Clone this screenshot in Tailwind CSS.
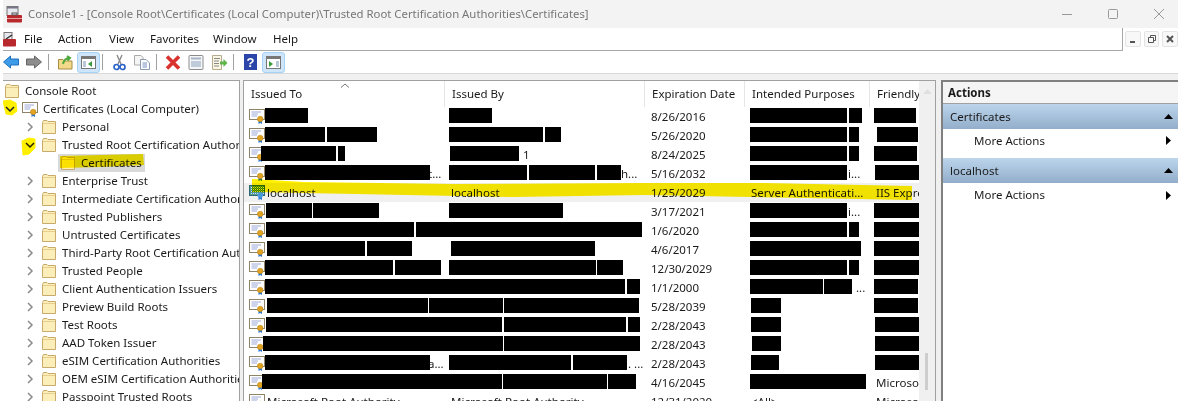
<!DOCTYPE html>
<html><head><meta charset="utf-8">
<title>Console1</title>
<script src="https://cdn.jsdelivr.net/npm/@tailwindcss/browser@4"></script>
</head>
<body class="w-[1178px] h-[401px] overflow-hidden bg-white font-['Noto_Sans',sans-serif] text-[11.5px] text-[#1a1a1a]">
<div class="pl-[3px] relative h-[401px] overflow-hidden">

  <!-- title bar -->
  <div class="flex items-center h-[28px] bg-[#f3f3f3] pl-[3px]">
    <svg width="17" height="17" viewBox="0 0 17 17" class="shrink-0"><rect x="1" y="0.5" width="11" height="9" fill="#e8e8f0" stroke="#777"/><rect x="1" y="0.5" width="11" height="2" fill="#778"/><rect x="1" y="9" width="15" height="7.5" rx="1" fill="#b8282c"/><rect x="6" y="7" width="5" height="2" fill="none" stroke="#555"/><rect x="1" y="12" width="15" height="1" fill="#e9a0a0"/></svg>
    <span class="ml-[5px] text-[11.35px] text-[#777] whitespace-nowrap">Console1 - [Console Root\Certificates (Local Computer)\Trusted Root Certification Authorities\Certificates]</span>
    <div class="ml-auto flex items-center h-full">
      <svg width="12" height="12" viewBox="0 0 12 12" class="mr-[34px]"><path d="M1 6.5H11" stroke="#999"/></svg>
      <svg width="12" height="12" viewBox="0 0 12 12" class="mr-[34px]"><rect x="1.5" y="1.5" width="9" height="9" rx="1" fill="none" stroke="#999"/></svg>
      <svg width="12" height="12" viewBox="0 0 12 12" class="mr-[13px]"><path d="M1 1L11 11M11 1L1 11" stroke="#999"/></svg>
    </div>
  </div>

  <!-- menu bar -->
  <div class="flex h-[23px]">
    <div class="flex-1 flex items-center border-b border-r border-[#a8a8a8] h-[23px]">
      <svg width="13" height="15" viewBox="0 0 13 15" class="shrink-0"><rect x="1" y="0.5" width="8" height="7" fill="#e8e8f0" stroke="#777"/><rect x="0" y="7" width="13" height="7.5" rx="1" fill="#b8282c"/><path d="M3 7L9 3" stroke="#333" stroke-width="1.5"/></svg>
      <span class="ml-[8px] w-[34px]">File</span>
      <span class="w-[51px]">Action</span>
      <span class="w-[41px]">View</span>
      <span class="w-[63px]">Favorites</span>
      <span class="w-[60px]">Window</span>
      <span>Help</span>
    </div>
    <div class="w-[55px] flex items-start gap-[3px] pt-[3px] pl-[2px]">
      <div class="w-[16px] h-[16px] bg-[#f8f8f8] border border-[#e4e4e4] rounded-[2px] flex items-center justify-center"><svg width="10" height="10" viewBox="0 0 10 10"><path d="M2 8H7" stroke="#555" stroke-width="2"/></svg></div>
      <div class="w-[16px] h-[16px] bg-[#f8f8f8] border border-[#e4e4e4] rounded-[2px] flex items-center justify-center"><svg width="10" height="10" viewBox="0 0 10 10"><path d="M1.5 3.5H6.5V8.5H1.5ZM3.5 3.5V1.5H8.5V6.5H6.5" fill="none" stroke="#555"/></svg></div>
      <div class="w-[16px] h-[16px] bg-[#f8f8f8] border border-[#e4e4e4] rounded-[2px] flex items-center justify-center"><svg width="10" height="10" viewBox="0 0 10 10"><path d="M2 2L8 8M8 2L2 8" stroke="#555" stroke-width="2"/></svg></div>
    </div>
  </div>

  <!-- toolbar -->
  <div class="flex items-center h-[23px] border-b border-[#d9d9d9]">
    <svg width="16" height="14" viewBox="0 0 16 14"><path d="M0.5 7L7.5 1V4H15.5V10H7.5V13Z" fill="#3d9be8" stroke="#1f6fc0"/></svg>
    <svg width="16" height="14" viewBox="0 0 16 14" class="ml-[7px]"><path d="M15.5 7L8.5 1V4H0.5V10H8.5V13Z" fill="#8c8c8c" stroke="#666"/></svg>
    <div class="w-px h-[16px] bg-[#a0a0a0] ml-[6px]"></div>
    <svg width="15" height="15" viewBox="0 0 15 15" class="ml-[9px]"><path d="M0.5 4.5H5L6.5 6H14V14H0.5Z" fill="#f3d98a" stroke="#a98b45"/><path d="M5 9C6 5 8 3 11 3M9 1L12 3L9.5 5.5" fill="none" stroke="#4ea83c" stroke-width="2"/></svg>
    <div class="ml-[4px] w-[23px] h-[21px] bg-[#cfe6fa] border border-[#a6d2f5] rounded-[3px] flex items-center justify-center">
      <svg width="15" height="13" viewBox="0 0 15 13"><rect x="0.5" y="0.5" width="14" height="12" fill="#fff" stroke="#777"/><rect x="1" y="1" width="13" height="2" fill="#777"/><rect x="2" y="5" width="3" height="6" fill="#b9c7d6"/><path d="M11 5V11L7 8Z" fill="#3a9a3a"/></svg>
    </div>
    <div class="w-px h-[16px] bg-[#a0a0a0] ml-[2px]"></div>
    <svg width="13" height="17" viewBox="0 0 13 17" class="ml-[10px]"><path d="M9 1L5 10M4 1L8 10" stroke="#8a8a8a" stroke-width="1.4"/><circle cx="3.5" cy="13" r="2.5" fill="none" stroke="#2a62c8" stroke-width="1.7"/><circle cx="9.5" cy="13" r="2.5" fill="none" stroke="#2a62c8" stroke-width="1.7"/></svg>
    <svg width="16" height="15" viewBox="0 0 16 15" class="ml-[8px]"><path d="M0.5 0.5H7L9 2.5V10H0.5Z" fill="#f5f5f5" stroke="#aaa"/><path d="M6.5 4.5H12L15.5 8V14.5H6.5Z" fill="#fff" stroke="#8a9bb5"/><path d="M8.5 8H13M8.5 10H13M8.5 12H13" stroke="#7090c8"/></svg>
    <div class="w-px h-[16px] bg-[#a0a0a0] ml-[6px]"></div>
    <svg width="16" height="15" viewBox="0 0 16 15" class="ml-[8px]"><path d="M2 1.5L14 13.5M14 1.5L2 13.5" stroke="#d8332f" stroke-width="3.6"/></svg>
    <svg width="16" height="15" viewBox="0 0 16 15" class="ml-[7px]"><rect x="1" y="0.5" width="14" height="14" rx="1" fill="#f4f6f8" stroke="#8c8c8c"/><rect x="3" y="2.5" width="10" height="2" fill="#a8b4c4"/><path d="M3 7H13M3 9H13M3 11H13" stroke="#8ba0bc"/></svg>
    <svg width="17" height="15" viewBox="0 0 17 15" class="ml-[7px]"><path d="M1.5 0.5H10.5V14.5H1.5Z" fill="#fbf6e4" stroke="#b5ab8f"/><path d="M3 3.5H9M3 6H8M3 8.5H8M3 11H8" stroke="#888"/><path d="M9 6.5H12.5V4L16.5 8L12.5 12V9.5H9Z" fill="#5fb548"/></svg>
    <div class="w-px h-[16px] bg-[#a0a0a0] ml-[5px]"></div>
    <svg width="13" height="16" viewBox="0 0 13 16" class="ml-[10px]"><rect width="13" height="16" fill="#2b46a8"/><text x="6.5" y="13" text-anchor="middle" font-size="13" font-weight="700" fill="#fff" font-family="Liberation Sans">?</text></svg>
    <div class="ml-[5px] w-[23px] h-[21px] bg-[#cfe6fa] border border-[#a6d2f5] rounded-[3px] flex items-center justify-center">
      <svg width="15" height="13" viewBox="0 0 15 13"><rect x="0.5" y="0.5" width="14" height="12" fill="#fff" stroke="#777"/><rect x="1" y="1" width="13" height="2" fill="#777"/><rect x="10" y="5" width="3" height="6" fill="#b9c7d6"/><path d="M3 5V11L7 8Z" fill="#3a9a3a"/></svg>
    </div>
  </div>

  <!-- panes -->
  <div class="flex gap-[3px] h-[327px] pt-[6px] bg-[#f0f0f0]">
    <div id="tree" class="relative w-[237px] bg-white border-t border-r border-[#a0a0a0] pt-px overflow-hidden"></div>

    <div class="relative w-[693px] flex bg-white border-t border-r border-l border-[#a0a0a0] overflow-hidden">
      <div class="relative w-[675px]">
        <svg width="10" height="5" viewBox="0 0 10 5" class="absolute left-[96px] top-[2px]"><path d="M1 4.5L5 1L9 4.5" fill="none" stroke="#777"/></svg>
        <div class="grid grid-cols-[200px_200px_100px_125px_50px] h-[26px] items-center whitespace-nowrap">
          <div class="pl-[7px] h-full flex items-center">Issued To</div>
          <div class="pl-[7px] border-l border-[#e5e5e5] h-full flex items-center">Issued By</div>
          <div class="pl-[7px] border-l border-[#e5e5e5] h-full flex items-center">Expiration Date</div>
          <div class="pl-[7px] border-l border-[#e5e5e5] h-full flex items-center">Intended Purposes</div>
          <div class="pl-[7px] border-l border-[#e5e5e5] h-full flex items-center">Friendly</div>
        </div>
        <div id="rows"></div>
      </div>
      <div class="relative w-[17px] bg-[#f0f0f0]">
        <svg width="9" height="5" viewBox="0 0 9 5" class="absolute left-[4px] top-[8px]"><path d="M0 5L4.5 0L9 5Z" fill="#e0e0e0"/></svg>
        <div class="absolute left-[6px] top-[272px] w-[3px] h-[37px] bg-[#cdcdcd]"></div>
      </div>
    </div>

    <div class="flex-1 ml-[2px] bg-white border-t-2 border-l-2 border-[#808080]">
      <div class="h-[22px] bg-[#f5f5f5] border-b border-[#a0a0a0] flex items-center pl-[5px] font-bold">Actions</div>
      <div class="h-[25px] bg-gradient-to-b from-[#bcd5ec] to-[#93aecb] flex items-center justify-between pl-[7px] pr-[5px]">Certificates<svg width="9" height="5" viewBox="0 0 9 5"><path d="M0 5L4.5 0L9 5Z" fill="#000"/></svg></div>
      <div class="h-[29px] pl-[31px] pr-[7px] pb-[6px] flex items-center justify-between">More Actions<svg width="5" height="9" viewBox="0 0 5 9"><path d="M0 0L5 4.5L0 9Z" fill="#000"/></svg></div>
      <div class="h-[25px] bg-gradient-to-b from-[#bcd5ec] to-[#93aecb] flex items-center justify-between pl-[7px] pr-[5px]">localhost<svg width="9" height="5" viewBox="0 0 9 5"><path d="M0 5L4.5 0L9 5Z" fill="#000"/></svg></div>
      <div class="h-[24px] pl-[31px] pr-[7px] flex items-center justify-between">More Actions<svg width="5" height="9" viewBox="0 0 5 9"><path d="M0 0L5 4.5L0 9Z" fill="#000"/></svg></div>
    </div>
  </div>
</div>

<script>
  const folder = `<svg width="14" height="14" viewBox="0 0 14 14" class="shrink-0"><path d="M0.5 2.5V13.5H13.5V1.5H6L5 0.5H1.5Z" fill="#fbeeb8" stroke="#c8ab6a"/><path d="M1 3.5H13" stroke="#e6cf8c"/></svg>`;
  const cert = `<svg width="16" height="15" viewBox="0 0 16 15" class="shrink-0"><rect x="0.5" y="0.5" width="15" height="10" fill="#fff" stroke="#8f8468"/><path d="M2.5 3H12M2.5 5H9M2.5 7H8" stroke="#9aa8d8"/><path d="M9.5 11H13V15L11.2 14L9.5 15Z" fill="#2a78d8"/><circle cx="11.2" cy="10" r="2.8" fill="#e0a422" stroke="#b77f10" stroke-width="0.5"/></svg>`;
  const certSel = `<svg width="16" height="15" viewBox="0 0 16 15" class="shrink-0"><defs><pattern id="dith" width="2" height="2" patternUnits="userSpaceOnUse"><rect width="2" height="2" fill="#2f7fd8"/><rect width="1" height="1" fill="#eef2d0"/><rect x="1" y="1" width="1" height="1" fill="#7cb84a"/></pattern></defs><rect x="0.5" y="0.5" width="15" height="10" fill="url(#dith)" stroke="#2a6a70"/><path d="M9.5 11H13V15L11.2 14L9.5 15Z" fill="#2a78d8"/><circle cx="11.2" cy="10" r="2.8" fill="#4a9ad8"/></svg>`;
  const chevR = `<svg width="8" height="10" viewBox="0 0 8 10" class="shrink-0"><path d="M2 1L6 5L2 9" fill="none" stroke="#8a8a8a" stroke-width="1.5"/></svg>`;
  const chevD = `<svg width="10" height="8" viewBox="0 0 10 8" class="shrink-0"><path d="M1 2L5 6L9 2" fill="none" stroke="#222" stroke-width="1.5"/></svg>`;

  const stores = ['Enterprise Trust', 'Intermediate Certification Author', 'Trusted Publishers', 'Untrusted Certificates', 'Third-Party Root Certification Aut', 'Trusted People', 'Client Authentication Issuers', 'Preview Build Roots', 'Test Roots', 'AAD Token Issuer', 'eSIM Certification Authorities', 'OEM eSIM Certification Authoritie', 'Passpoint Trusted Roots'];
  const line = (inner) => `<div class="flex items-center h-[18px] whitespace-nowrap">${inner}</div>`;
  const gap = (w) => `<span class="shrink-0" style="width:${w}px"></span>`;
  let treeHtml = line(gap(2) + folder + gap(6) + '<span>Console Root</span>');
  treeHtml += line(gap(2) + `<span class="relative z-10 flex">${chevD}</span>` + gap(7) + cert + gap(5) + '<span>Certificates (Local Computer)</span>');
  treeHtml += line(gap(23) + chevR + gap(8) + folder + gap(6) + '<span>Personal</span>');
  treeHtml += line(gap(22) + chevD + gap(7) + folder + gap(6) + '<span>Trusted Root Certification Authori</span>');
  treeHtml += line(gap(55) + `<div class="flex items-center h-[18px] bg-[#d9d9d9] pl-[3px] pr-[3px]">${folder}${gap(6)}<span>Certificates</span></div>`);
  stores.forEach((s) => { treeHtml += line(gap(23) + chevR + gap(8) + folder + gap(6) + `<span>${s}</span>`); });
  treeHtml += `<svg class="absolute left-0 top-0 mix-blend-multiply" width="236" height="100"><path d="M0 20L7 19L13 22L14 30L9 34L3 33Z" fill="#fff000" stroke="#fff000" stroke-linejoin="round"/><path d="M19 60L26 57L32 58L32 67L26 73L20 74Z" fill="#fff000" stroke="#fff000" stroke-linejoin="round"/><path d="M57 75L140 73L141 84L98 86L57 87Z" fill="#fff000"/></svg>`;
  document.getElementById('tree').innerHTML = treeHtml;

  // redaction boxes: [left, width] in screenshot x, per row; tail text shows after them
  const rows = [
    { bars: [[265,43],[449,43],[750,97],[849,13],[874,42]], date: '8/26/2016' },
    { bars: [[265,60],[327,50],[449,94],[545,16],[750,97],[849,10],[877,41]], date: '5/26/2020' },
    { bars: [[261,75],[338,7],[450,69],[750,97],[849,10],[874,43]], date: '8/24/2025', by: '1', byPad: 'pl-[79px]' },
    { bars: [[265,165],[449,78],[529,66],[597,24],[750,97],[875,45]], date: '5/16/2032', to: 't...', toPad: 'pl-[163px]', by: 'h...', byPad: 'pl-[177px]', use: 'i...', usePad: 'pl-[104px]' },
    { sel: true, to: 'localhost', by: 'localhost', date: '1/25/2029', use: 'Server Authenticati...', fr: 'IIS Expre' },
    { bars: [[266,46],[313,66],[449,114],[750,97],[874,46]], date: '3/17/2021', use: 'i...', usePad: 'pl-[104px]' },
    { bars: [[266,148],[416,226],[750,97],[849,10],[874,46]], date: '1/6/2020' },
    { bars: [[267,98],[367,45],[451,144],[750,111],[874,46]], date: '4/6/2017' },
    { bars: [[265,128],[395,46],[449,147],[597,26],[750,97],[849,10],[874,46]], date: '12/30/2029' },
    { bars: [[265,360],[627,13],[750,73],[824,28],[874,44]], date: '1/1/2000', use: '...', usePad: 'pl-[112px]' },
    { bars: [[267,161],[429,74],[504,135],[751,30],[874,44]], date: '5/28/2039' },
    { bars: [[266,236],[504,122],[628,12],[751,30],[875,44]], date: '2/28/2043' },
    { bars: [[263,240],[504,136],[752,29],[875,44]], date: '2/28/2043' },
    { bars: [[265,165],[449,122],[573,54],[751,28],[875,44]], date: '2/28/2043', to: 'a...', toPad: 'pl-[163px]', by: '. ...', byPad: 'pl-[184px]' },
    { bars: [[262,240],[503,104],[608,28],[750,116]], date: '4/16/2045', fr: 'Microso' },
    { to: 'Microsoft Root Authority', by: 'Microsoft Root Authority', date: '12/31/2020', use: '<All>', fr: 'Microso' },
  ];
  const listLeft = 244;
  document.getElementById('rows').innerHTML = rows.map((r) => {
    const esc = (s) => (s || '').replace(/</g, '&lt;');
    const bars = (r.bars || []).map(([x, w]) => `<div class="absolute top-[1px] h-[15px] bg-black" style="left:${x - listLeft}px;width:${w}px"></div>`).join('');
    return `<div class="relative grid grid-cols-[200px_200px_100px_125px_50px] items-center h-[19px] whitespace-nowrap ${r.sel ? 'bg-[#f0f0f0]' : ''}">
      <div class="flex items-center pl-[5px] overflow-hidden">${r.sel ? certSel : cert}<span class="${r.toPad || 'ml-[2px]'}">${esc(r.to)}</span></div>
      <div class="${r.byPad || 'pl-[7px]'} overflow-hidden">${esc(r.by) || '&nbsp;'}</div>
      <div class="pl-[7px] overflow-hidden">${r.date}</div>
      <div class="${r.usePad || 'pl-[7px]'} overflow-hidden">${esc(r.use) || '&nbsp;'}</div>
      <div class="pl-[7px] overflow-hidden">${esc(r.fr) || '&nbsp;'}</div>
      ${bars}
    </div>`;
  }).join('') + `<svg class="absolute left-0 top-0 mix-blend-multiply" width="675" height="130"><path d="M8 98L60 101L210 103L400 102L520 102L668 105L668 119L560 117L400 114L270 116L60 112L8 111Z" fill="#fff000"/></svg>`;
</script>
</body></html>
